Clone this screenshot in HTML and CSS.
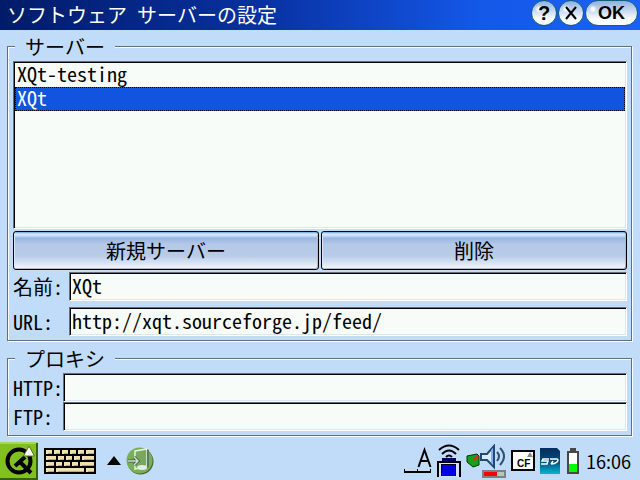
FILE: index.html
```html
<!DOCTYPE html>
<html lang="ja">
<head>
<meta charset="utf-8">
<title>ソフトウェア サーバーの設定</title>
<link rel="stylesheet" href="styles.css">
</head>
<body>
<header class="titlebar">
  <h1>ソフトウェア サーバーの設定</h1>
  <div class="title-actions">
    <button class="orb" type="button">?</button>
    <button class="orb" type="button" aria-label="閉じる"><svg width="14" height="14" viewBox="0 0 14 14"><path d="M2 1l10 12M12 1L2 13" stroke="#000" stroke-width="2"/></svg></button>
    <button class="orb ok" type="submit" form="settings">OK</button>
  </div>
</header>

<form id="settings" class="settings">
  <fieldset>
    <legend>サーバー</legend>
    <select class="sunken servers" size="7" aria-label="サーバー">
      <option>XQt-testing</option>
      <option selected>XQt</option>
    </select>
    <div class="buttons">
      <button class="push" type="button">新規サーバー</button>
      <button class="push" type="button">削除</button>
    </div>
    <div class="fields server-fields">
      <label for="name">名前:</label>
      <input class="sunken" id="name" type="text" value="XQt">
      <label for="url">URL:</label>
      <input class="sunken" id="url" type="text" value="http://xqt.sourceforge.jp/feed/">
    </div>
  </fieldset>
  <fieldset>
    <legend>プロキシ</legend>
    <div class="fields proxy-fields">
      <label for="http">HTTP:</label>
      <input class="sunken" id="http" type="text">
      <label for="ftp">FTP:</label>
      <input class="sunken" id="ftp" type="text">
    </div>
  </fieldset>
</form>

<footer class="taskbar">
  <svg class="start" width="38" height="38" viewBox="0 0 38 38">
    <path fill="#80c020" d="M0 0h38v38H0z"/>
    <path fill="#a8d850" d="M0 0h38v2H0z"/>
    <path fill="#386008" d="M36 1h2v37H0v-2h36z"/>
    <circle cx="19" cy="19" r="11.500" fill="none" stroke="#000" stroke-width="4"/>
    <path d="M20 20l11 11M15 24l10-9" stroke="#000" stroke-width="4"/>
    <path d="M29 4l5.500 10h-11z" fill="#fff" stroke="#507818"/>
  </svg>
  <svg class="keyboard" width="52" height="26" viewBox="0 0 52 26">
    <path d="M0 0h52v26H0z"/>
    <path fill="#f0e0b0" d="M2 2h6v4H2zm8 0h6v4h-6zm8 0h6v4h-6zm8 0h6v4h-6zm8 0h6v4h-6zm8 0h8v4h-8zM2 8h10v4H2zm12 0h6v4h-6zm8 0h6v4h-6zm8 0h6v4h-6zm8 0h12v4H38zM2 14h8v4H2zm10 0h6v4h-6zm8 0h6v4h-6zm8 0h6v4h-6zm8 0h14v4H36zM2 20h8v4H2zm10 0h28v4H12zm30 0h8v4h-8z"/>
    <path fill="none" stroke="#b8a878" d="M4 5.500h4m4 0h4m4 0h4m4 0h4m4 0h4m4 0h6M4 11.500h8m4 0h4m4 0h4m4 0h4m4 0h10M4 17.500h6m4 0h4m4 0h4m4 0h4m4 0h12M4 23.500h6m4 0h26m4 0h6"/>
  </svg>
  <svg class="arrow" width="14" height="9" viewBox="0 0 14 9"><path d="M7 0l7 9H0z"/></svg>
  <svg class="app" width="28" height="28" viewBox="0 0 28 28">
    <circle cx="14.500" cy="14.500" r="13" fill="#486830"/>
    <circle cx="13.500" cy="13.500" r="13" fill="#78b058"/>
    <path d="M9 4l12-2v17l-12 3z" fill="#78a860" stroke="#e8f0e0" stroke-width="1.500"/>
    <path d="M21 2l2 1v17l-2 1" fill="#607858"/>
    <path d="M2 14h9M8 10l4 4-4 4" fill="none" stroke="#405840" stroke-width="3"/>
    <path d="M2 14h9M8 10l4 4-4 4" fill="none" stroke="#d0e0d0" stroke-width="1.500"/>
    <ellipse cx="16" cy="20.500" rx="5" ry="2.500" fill="#e4ece4"/>
  </svg>
  <div class="tray">
    <svg class="input-mode" width="28" height="27" viewBox="0 0 28 27">
      <path d="M14.500 20l6-17 6 17M16.500 14h8" fill="none" stroke="#000" stroke-width="2"/>
      <path d="M0 24h27v2H0zM0 22h1v2H0zM13 22h1v2h-1zM26 22h1v2h-1z"/>
    </svg>
    <svg class="wireless" width="24" height="33" viewBox="0 0 24 33">
      <path d="M2 6q10-9 20 0M5 10q7-7 14 0M9 13q3-3 6 0" fill="none" stroke="#000" stroke-width="2"/>
      <path d="M5 14h14v3H5z" fill="#000060"/><path d="M0 17h24v16H0z"/>
      <path d="M2 19h20v14H2z" fill="#d0e4ff"/><path d="M4 20h15v12H4z"/><path d="M5 21h13v11H5z" fill="#0000e8"/>
    </svg>
    <svg class="sound" width="40" height="34" viewBox="0 0 40 34">
      <path d="M1 12l10-2 2 2v9l-6 2-6-5z" fill="#18a018" stroke="#003800"/>
      <path d="M8 16l4-4" stroke="#f02020" stroke-width="2"/>
      <path d="M15 10h6l7-8v21l-7-7h-6z" fill="#d8ecff" stroke="#204878" stroke-width="2"/>
      <path d="M25 6l2-2v17l-2-2z" fill="#80b0e8"/>
      <path d="M31 8q4 4 0 9M34 4q8 8 0 17" fill="none" stroke="#305070" stroke-width="2"/>
      <path d="M16 26h24v8H16z" fill="#808080"/><path d="M18 28h20v4H18z" fill="#c0c0c0"/><path d="M18 28h13v4H18z" fill="#f00"/>
    </svg>
    <svg class="cf" width="24" height="21" viewBox="0 0 24 21">
      <path d="M1 1h22v19H1z" fill="#fff" stroke="#000" stroke-width="2"/>
      <path d="M19 2l3 5h-6z" fill="#888"/>
      <text class="card-text" x="6" y="17" font-size="10">CF</text>
    </svg>
    <svg class="sd" width="20" height="26" viewBox="0 0 20 26">
      <defs><linearGradient id="sd-fill" x2="0" y2="1"><stop stop-color="#003060"/><stop offset=".5" stop-color="#004878"/><stop offset="1" stop-color="#00b8d0"/></linearGradient></defs>
      <path d="M0 0h17l3 3v23H0z" fill="url(#sd-fill)"/>
      <path d="M9 11H3l-1 2h6l-1 3H1M11 16l2-3M10 11h7q2 1 0 3t-6 2" fill="none" stroke="#fff" stroke-width="1.500"/>
    </svg>
    <svg class="battery" width="12" height="26" viewBox="0 0 12 26">
      <path d="M3 0h6v3h3v23H0V3h3z" fill="#484848"/><path d="M2 5h8v19H2z" fill="#fff"/><path d="M2 16h8v8H2z" fill="#0f0"/>
    </svg>
    <time class="clock">16:06</time>
  </div>
</footer>
</body>
</html>
```

FILE: styles.css
```css
* { box-sizing: border-box; }

body {
  margin: 0;
  min-height: 100vh;
  display: flex;
  flex-direction: column;
  background: #c0dcf8;
  color: #000;
  font: 20px/20px "Noto Sans Mono CJK JP", "Noto Sans CJK JP", monospace;
}

button, input, select { font: inherit; color: inherit; margin: 0; }

.titlebar {
  height: 30px;
  display: flex;
  align-items: center;
  justify-content: space-between;
  padding: 0 2px 0 7px;
  background: linear-gradient(90deg, #001c68, #0830a0 40%, #1458e8 75%, #1c60f8);
  color: #fff;
}

h1 { margin: 0; font-size: 20px; font-weight: 400; }

.title-actions { display: flex; align-self: flex-start; gap: 1px; }

.orb {
  width: 26px;
  height: 26px;
  display: grid;
  place-items: center;
  padding: 0;
  border: 1px solid #106078;
  border-radius: 13px;
  background: radial-gradient(circle at 7px 8px, #fff 1px, transparent 4px), linear-gradient(#90b0e0, #f8fcff 75%);
  color: #000;
  font: bold 20px/24px "Liberation Sans", sans-serif;
}

.ok { width: 53px; font-size: 18px; }

.settings { padding: 6px 8px 0 7px; }

fieldset {
  margin: 0;
  min-width: 0;
  padding: 4px 4px 4px 5px;
  border: 1px solid #607080;
  box-shadow: 1px 1px #fff, inset 1px 1px #fff;
}

fieldset + fieldset { margin-top: 7px; }

legend {
  margin-left: 2px;
  padding: 0 10px;
  line-height: 21px;
  background: #c0dcf8;
}

.sunken {
  width: 100%;
  min-width: 0;
  border: 1px solid;
  border-color: #607080 #fff #fff #607080;
  border-radius: 0;
  outline: 0;
  background: #f8fcf8;
  box-shadow: inset 1px 1px #000, inset -1px -1px #d8e8f4;
}

input.sunken { height: 29px; padding: 0 2px 2px; }

.servers {
  display: block;
  height: 168px;
  padding: 1px;
  overflow: hidden;
}

.servers option {
  display: flex;
  align-items: center;
  height: 24px;
  min-height: 24px;
  padding: 0 1px 4px;
  border: 1px solid transparent;
  line-height: 18px;
}

.servers option:checked {
  border: 1px dotted #000;
  background: linear-gradient(#1054e0, #1054e0) border-box;
  color: #fff;
}

.buttons { display: grid; grid-template-columns: 1fr 1fr; gap: 2px; margin: 2px 0; }

.push {
  height: 39px;
  border: 1px solid #000;
  border-radius: 3px;
  background: linear-gradient(#70a0e0 0, #d8e8fc 2px, #c8dcf8 4px, #98b4e0 6px, #b4c8e8 12px, #b8cce8 24px, #f4f8fc);
  box-shadow: inset 1px 0 #d8e8f8, inset -1px -1px #b8b8b8;
}

.fields { display: grid; align-items: center; }
.server-fields { grid-template-columns: 56px 1fr; row-gap: 6px; }
.proxy-fields { grid-template-columns: 50px 1fr; }

.taskbar {
  flex: 1;
  display: flex;
  align-items: center;
  padding: 5px 9px 0 0;
}

.keyboard { margin-left: 6px; }
.arrow { margin-left: 11px; }
.app { margin-left: 5px; }
.tray { margin-left: auto; display: flex; align-items: center; gap: 5px; }
.battery { margin: 0 2px; }
.card-text { font-family: "Liberation Sans", sans-serif; font-weight: bold; }
.clock { font: 18px/20px "Noto Sans CJK JP", sans-serif; }
```
